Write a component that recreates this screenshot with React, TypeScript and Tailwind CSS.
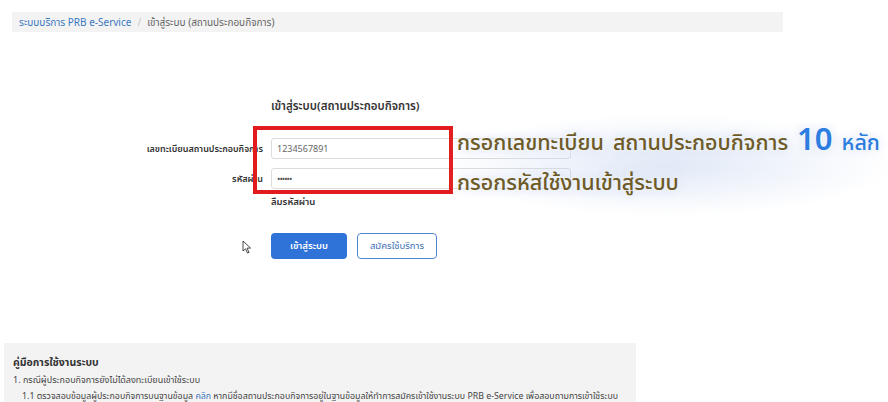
import React from "react";

export default function App() {
  const font = { fontFamily: '"Noto Sans", "Noto Sans Thai", "Tahoma", sans-serif' };
  return (
    <div className="relative w-[888px] h-[402px] overflow-hidden bg-white text-[#333]" style={font}>
      {/* breadcrumb */}
      <div className="pt-[12px] pl-[12px]">
        <div className="w-[771px] h-[20px] bg-[#f3f3f3] flex items-center px-[7px] text-[10px] gap-[6px]">
          <span className="text-[#3b78c2]">ระบบบริการ PRB e-Service</span>
          <span className="text-[#c8c8c8]">/</span>
          <span className="text-[#666]">เข้าสู่ระบบ (สถานประกอบกิจการ)</span>
        </div>
      </div>

      {/* form */}
      <div className="pt-[64px] grid grid-cols-[263px_300px] gap-x-[8px]">
        <div />
        <div className="text-[11.5px] font-semibold text-[#333] h-[20px] leading-[20px]">เข้าสู่ระบบ(สถานประกอบกิจการ)</div>

        <div className="mt-[22px] h-[21px] flex items-center justify-end text-[9px] font-semibold text-[#333]">เลขทะเบียนสถานประกอบกิจการ</div>
        <div className="mt-[22px] h-[21px] border border-[#dcdcdc] rounded-[3px] flex items-center px-[5px] text-[9px] text-[#666]">1234567891</div>

        <div className="mt-[9px] h-[21px] flex items-center justify-end text-[9px] font-semibold text-[#333]">รหัสผ่าน</div>
        <div className="mt-[9px] h-[21px] border border-[#dcdcdc] rounded-[3px] flex items-center px-[5px] text-[9px] text-[#555] tracking-[-1px]">••••••</div>

        <div />
        <div className="mt-[6px] text-[9.5px] font-semibold text-[#333] h-[14px] leading-[14px]">ลืมรหัสผ่าน</div>

        <div />
        <div className="mt-[24px] flex gap-[10px]">
          <div className="w-[76px] h-[26px] rounded-[4px] bg-[#2f73d8] text-white text-[9.5px] font-semibold flex items-center justify-center">เข้าสู่ระบบ</div>
          <div className="w-[80px] h-[26px] rounded-[4px] border border-[#4f86d0] text-[#3d6fb8] text-[9.5px] flex items-center justify-center">สมัครใช้บริการ</div>
        </div>
      </div>

      {/* bottom manual panel */}
      <div className="absolute left-[4px] top-[343px] w-[632px] h-[70px] bg-[#f3f3f3] px-[9px] pt-[12px]">
        <div className="text-[10.5px] font-bold text-[#333] leading-[14px]">คู่มือการใช้งานระบบ</div>
        <div className="mt-[5px] text-[9px] text-[#444] leading-[12px]">1. กรณีผู้ประกอบกิจการยังไม่ได้ลงทะเบียนเข้าใช้ระบบ</div>
        <div className="mt-[4px] pl-[9px] text-[8.8px] text-[#444] leading-[12px] whitespace-nowrap">
          1.1 ตรวจสอบข้อมูลผู้ประกอบกิจการบนฐานข้อมูล <span className="text-[#3b78c2]">คลิก</span> หากมีชื่อสถานประกอบกิจการอยู่ในฐานข้อมูลให้ทำการสมัครเข้าใช้งานระบบ PRB e-Service เพื่อสอบถามการเข้าใช้ระบบ
        </div>
      </div>

      {/* annotation overlay: red box */}
      <div className="absolute left-[253px] top-[126px] w-[200px] h-[68px] border-[4px] border-[#e21c1c]" />

      {/* annotation haze */}
      <div className="absolute left-[445px] top-[115px] w-[443px] h-[100px] rounded-[50px] bg-[radial-gradient(ellipse_at_center,rgba(200,215,240,0.55),rgba(255,255,255,0)_72%)]" />
      <div
        className="absolute left-[457px] top-[123px] flex items-baseline gap-[9px] whitespace-nowrap text-[21.5px] font-medium text-[#6e5a26]"
        style={{ textShadow: "0 0 6px #fff, 0 0 10px rgba(190,205,235,0.9)" }}
      >
        <span>กรอกเลขทะเบียน</span>
        <span>สถานประกอบกิจการ</span>
        <span className="text-[31px] font-semibold text-[#2b7de0] leading-none">10</span>
        <span className="text-[#2b7de0]">หลัก</span>
      </div>
      <div
        className="absolute left-[457px] top-[166px] whitespace-nowrap text-[21.5px] font-medium text-[#6e5a26]"
        style={{ textShadow: "0 0 6px #fff, 0 0 10px rgba(190,205,235,0.9)" }}
      >
        กรอกรหัสใช้งานเข้าสู่ระบบ
      </div>

      {/* mouse cursor */}
      <svg className="absolute left-[242px] top-[240px]" width="10" height="14" viewBox="0 0 10 14">
        <path d="M1 1 L1 11 L3.5 8.8 L5.5 13 L7 12.3 L5 8.2 L8.5 8 Z" fill="#fff" stroke="#333" strokeWidth="0.9" strokeLinejoin="round" />
      </svg>
    </div>
  );
}
